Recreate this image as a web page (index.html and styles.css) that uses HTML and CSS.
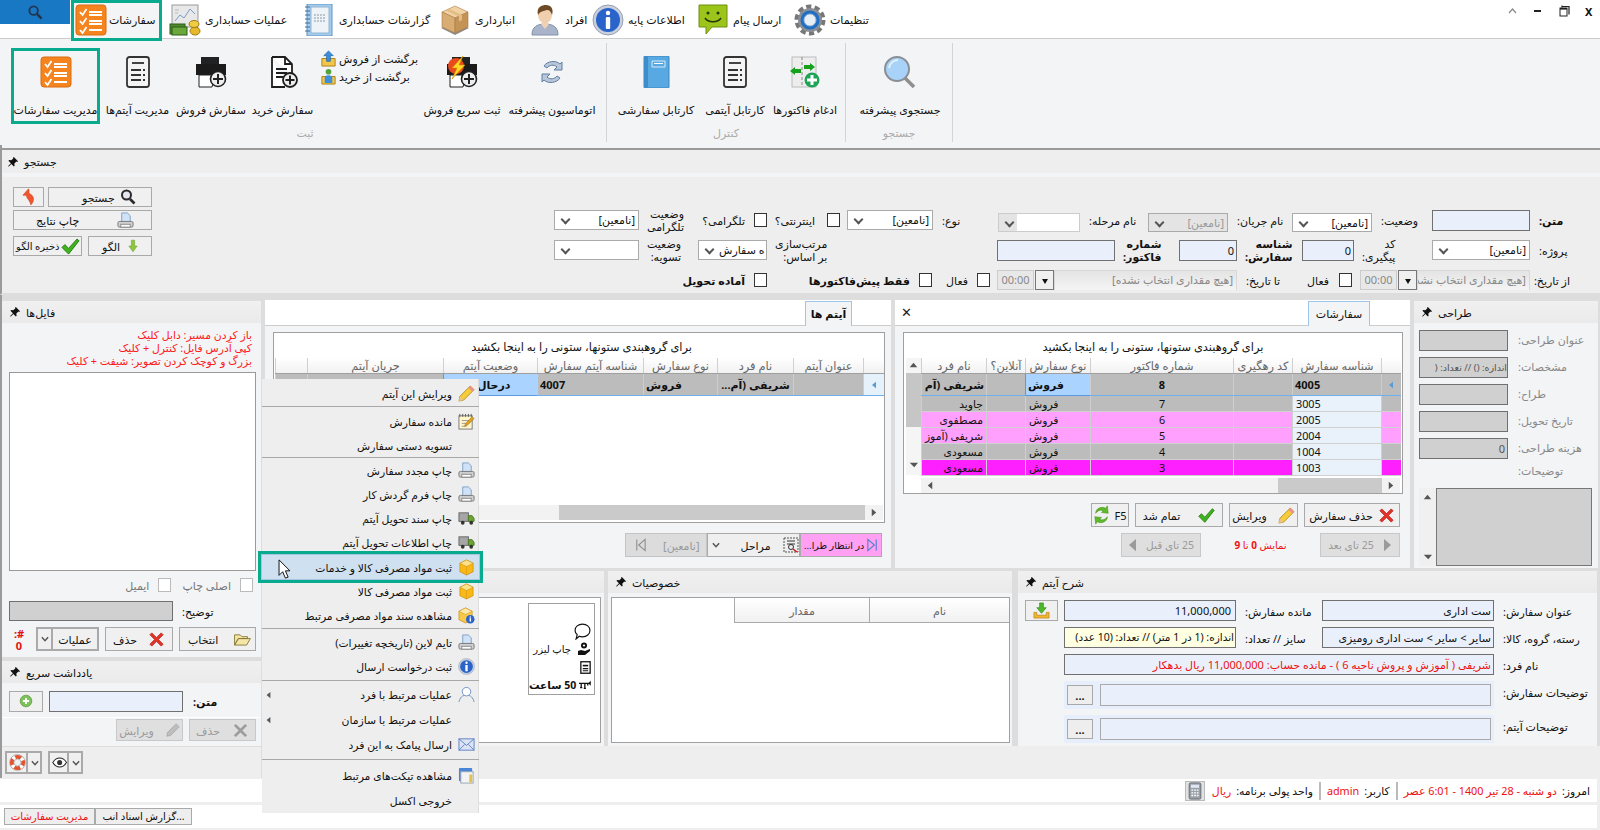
FILE: index.html
```html
<!DOCTYPE html>
<html lang="fa">
<head>
<meta charset="utf-8">
<title>مدیریت سفارشات</title>
<link rel="stylesheet" href="styles.css">
</head>
<body>
<svg class="sprite" xmlns="http://www.w3.org/2000/svg">
  <symbol id="i-orders" viewBox="0 0 32 32"><rect x="1" y="1" width="30" height="30" rx="3" fill="#f5841f" stroke="#d96d10"/><path d="M5 8l2.500 3 4-6M5 17l2.500 3 4-6M5 26l2.500 3 4-6" fill="none" stroke="#fff" stroke-width="1.800"/><path d="M14 8h13M14 11h13M14 17h13M14 20h13M14 26h13" stroke="#fff" stroke-width="1.800"/></symbol>
  <symbol id="i-acc" viewBox="0 0 32 32"><rect x="3" y="1" width="26" height="22" fill="#e8e8e8" stroke="#999"/><path d="M6 17l5-6 4 3 6-9 5 5" fill="none" stroke="#7b9cc9"/><path d="M6 6h4M6 9h3" stroke="#bbb"/><rect x="1" y="20" width="15" height="10" fill="#4f8a2c" stroke="#2c5c17"/><rect x="3" y="23" width="15" height="8" fill="#6ba73a" stroke="#2c5c17"/><ellipse cx="26" cy="27" rx="5" ry="4" fill="#e5b92b" stroke="#a17c0d"/><ellipse cx="25" cy="20" rx="5" ry="3.500" fill="#f0cb44" stroke="#a17c0d"/></symbol>
  <symbol id="i-note" viewBox="0 0 32 32"><rect x="4" y="0" width="25" height="32" fill="#a7cbea" stroke="#5a93c4"/><rect x="8" y="3" width="18" height="26" fill="#eef3f8" stroke="#8fb5d6"/><path d="M11 11h12M11 14h12M11 17h12" stroke="#8a9aa8" stroke-dasharray="2 1"/><path d="M2 3h5M2 7h5M2 11h5M2 15h5M2 19h5M2 23h5M2 27h5" stroke="#3b6f9c"/></symbol>
  <symbol id="i-box" viewBox="0 0 32 32"><path d="M2 24l14 7 14-7-14-6z" fill="#8c8c8c"/><path d="M16 2L3 8l13 6 13-6z" fill="#f0d2a3" stroke="#a97c46" stroke-width=".600"/><path d="M3 8v15l13 6V14z" fill="#d8ac72" stroke="#a97c46" stroke-width=".600"/><path d="M29 8v15l-13 6V14z" fill="#c49356" stroke="#a97c46" stroke-width=".600"/><path d="M10 5l13 6v5l-3 1.500v-5L7 6.500z" fill="#e2bb85"/></symbol>
  <symbol id="i-person" viewBox="0 0 32 32"><path d="M3 31c0-8 5-11 13-11s13 3 13 11z" fill="#a9b3c9" stroke="#8390a8"/><path d="M12 20l4 5 4-5-2-2h-4z" fill="#f0d3b5"/><ellipse cx="16" cy="11" rx="7" ry="8.500" fill="#efcfae"/><path d="M9 11C7 3 13 1 17 1c5 0 8 4 6 10-1-3-2-5-5-5-3 1-7 1-9 5z" fill="#6e4a26"/></symbol>
  <symbol id="i-info" viewBox="0 0 32 32"><circle cx="16" cy="16" r="15" fill="#c9d0dc" stroke="#98a2b3"/><circle cx="16" cy="16" r="12" fill="#2a63c9"/><circle cx="16" cy="9" r="2.200" fill="#fff"/><rect x="13.800" y="13" width="4.400" height="12" rx="1" fill="#fff"/></symbol>
  <symbol id="i-msg" viewBox="0 0 32 32"><path d="M2 1h28v22H15l-6 7v-7H2z" fill="#9cc51c" stroke="#6f8f0e"/><circle cx="11" cy="9" r="1.500" fill="#26360a"/><circle cx="21" cy="9" r="1.500" fill="#26360a"/><path d="M8 14c3 5 13 5 16 0" fill="none" stroke="#26360a" stroke-width="1.500"/></symbol>
  <symbol id="i-gear" viewBox="0 0 32 32"><circle cx="16" cy="16" r="13" fill="none" stroke="#777" stroke-width="5" stroke-dasharray="5 3.170"/><circle cx="16" cy="16" r="12" fill="#8a8f96"/><circle cx="16" cy="16" r="9.500" fill="#1f6fc4"/><circle cx="16" cy="16" r="6" fill="#e8eef5" stroke="#9bb8d8"/></symbol>
  <symbol id="i-lens" viewBox="0 0 16 16"><circle cx="6.500" cy="6" r="4.500" fill="#e4e8ee" stroke="#2a2a2a" stroke-width="2"/><path d="M10 10l4.500 4.500" stroke="#2a2a2a" stroke-width="2.600"/></symbol>
  <symbol id="i-lens-blue" viewBox="0 0 16 16"><circle cx="6" cy="6" r="4.500" fill="none" stroke="#22364f" stroke-width="2"/><path d="M9.500 9.500l5 5" stroke="#22364f" stroke-width="2.800"/></symbol>
  <symbol id="i-items" viewBox="0 0 32 32"><rect x="5" y="1" width="22" height="30" rx="2.500" fill="#f4f4f4" stroke="#333" stroke-width="1.800"/><rect x="10" y="6" width="12" height="2" fill="#444"/><path d="M9 14h10M9 19h10M9 24h10" stroke="#333" stroke-width="2.200"/><path d="M21 14h3M21 19h3M21 24h3" stroke="#333" stroke-width="2.200" stroke-dasharray="2 1"/></symbol>
  <symbol id="i-print-add" viewBox="0 0 32 32"><rect x="6" y="1" width="18" height="7" fill="#222"/><rect x="1" y="8" width="30" height="11" fill="#1b1b1b"/><path d="M4 19h16l-3 12H4z" fill="#fff" stroke="#222"/><circle cx="23" cy="23" r="7.500" fill="#eee" stroke="#222" stroke-width="1.600"/><path d="M23 18v10M18 23h10" stroke="#222" stroke-width="2"/></symbol>
  <symbol id="i-doc-add" viewBox="0 0 32 32"><path d="M5 1h13l7 7v11M25 8h-7V1M5 1v30h13" fill="#fff" stroke="#1e1e1e" stroke-width="1.800"/><path d="M9 13h11M9 17h11M9 21h7" stroke="#1e1e1e" stroke-width="1.800"/><circle cx="23" cy="24" r="7" fill="#eee" stroke="#1e1e1e" stroke-width="1.800"/><path d="M23 19.500v9M18.500 24h9" stroke="#1e1e1e" stroke-width="2"/></symbol>
  <symbol id="i-ret-up" viewBox="0 0 18 18"><path d="M2 9h14v8H2z" fill="#f2c64a" stroke="#a9821a"/><path d="M9 1l5 5h-3v6H7V6H4z" fill="#3c8fdc" stroke="#1c5f9e" stroke-width=".700"/></symbol>
  <symbol id="i-ret-in" viewBox="0 0 18 18"><path d="M2 9h14v8H2z" fill="#f2c64a" stroke="#a9821a"/><circle cx="9" cy="4" r="3" fill="#53a43a"/><path d="M5 10c0-3 8-3 8 0v6H5z" fill="#3c8fdc"/></symbol>
  <symbol id="i-fast" viewBox="0 0 32 32"><rect x="6" y="1" width="18" height="7" fill="#222"/><rect x="1" y="8" width="30" height="11" fill="#1b1b1b"/><path d="M4 19h16l-3 12H4z" fill="#fff" stroke="#222"/><circle cx="23" cy="23" r="7.500" fill="#eee" stroke="#222" stroke-width="1.600"/><path d="M23 18v10M18 23h10" stroke="#222" stroke-width="2"/><circle cx="10" cy="10" r="8" fill="#e8491d"/><path d="M17 0L6 12h5l-5 11 13-14h-6z" fill="#ffd726" stroke="#d08a00" stroke-width=".600"/></symbol>
  <symbol id="i-cycle" viewBox="0 0 32 32"><path d="M8 10C11 5 20 4 24 8l2-2v8h-8l3-3c-3-3-8-2-10 1zM24 22c-3 5-12 6-16 2l-2 2v-8h8l-3 3c3 3 8 2 10-1z" fill="#b8c6d8" stroke="#5f7ea3"/></symbol>
  <symbol id="i-book" viewBox="0 0 32 32"><rect x="4" y="0" width="25" height="32" rx="1" fill="#58a8e2" stroke="#3d85bd"/><rect x="4" y="0" width="4" height="32" fill="#3d8ccc"/><path d="M12 5h13v6H12z" fill="none" stroke="#d6ebfa"/><path d="M14 7.500h9" stroke="#fff"/></symbol>
  <symbol id="i-merge" viewBox="0 0 32 32"><rect x="3" y="1" width="24" height="30" fill="#ededed" stroke="#bbb"/><path d="M13 1v30" stroke="#888" stroke-dasharray="3 2"/><path d="M1 15l5-4v2h6v4H6v2z" fill="#16a11c"/><path d="M26 11l-5-4v2h-6v4h6v2z" fill="#16a11c"/><circle cx="23" cy="24" r="7.500" fill="#1ea456"/><path d="M23 19v10M18 24h10" stroke="#fff" stroke-width="3"/></symbol>
  <symbol id="i-glass" viewBox="0 0 32 32"><path d="M21 22l9 9" stroke="#8f8f8f" stroke-width="3.500"/><circle cx="13" cy="13" r="12" fill="#a8d2f7" stroke="#8a8f96" stroke-width="2"/><path d="M5 12c1-6 6-8 9-8" fill="none" stroke="#dff0ff" stroke-width="2"/></symbol>
  <symbol id="i-pin" viewBox="0 0 12 12"><path d="M7 0l5 5-1 1-1-.500-2.500 2.500.500 2.500-1 1-3-3L1 11.500 0 11l3.500-3.500-3-3 1-1 2.500.500L6.500 1.500 6 1z" fill="#111"/></symbol>
  <symbol id="i-undo" viewBox="0 0 16 20"><path d="M7 1L1 8h4c0 4 4 5 5 11 4-3 5-11-2-13V1z" fill="#f0552d" stroke="#c53c18" stroke-width=".600"/></symbol>
  <symbol id="i-printer" viewBox="0 0 18 18"><path d="M5 1h6l3 3v7H5z" fill="#cfe2f8" stroke="#7fa0c8"/><rect x="1" y="10" width="16" height="6" rx="1.500" fill="#d0d0d0" stroke="#777"/><rect x="4" y="13" width="10" height="3" fill="#fff" stroke="#888"/></symbol>
  <symbol id="i-down" viewBox="0 0 12 16"><path d="M4 1h4v7h3l-5 7-5-7h3z" fill="#8cc63e" stroke="#6a9a26" stroke-width=".600"/></symbol>
  <symbol id="i-check" viewBox="0 0 20 18"><path d="M1 10l3-3 4 4L17 1l2 2L8 17z" fill="#3fb41e" stroke="#1f7a0a"/></symbol>
  <symbol id="i-x" viewBox="0 0 18 18"><path d="M2 4l2-2 5 5 5-5 2 2-5 5 5 5-2 2-5-5-5 5-2-2 5-5z" fill="#e53226" stroke="#b4201a" stroke-width=".800"/></symbol>
  <symbol id="i-x-off" viewBox="0 0 18 18"><path d="M2 4l2-2 5 5 5-5 2 2-5 5 5 5-2 2-5-5-5 5-2-2 5-5z" fill="#9d9d9d"/></symbol>
  <symbol id="i-pencil" viewBox="0 0 18 18"><path d="M13 1l4 4L6 16l-5 1 1-5z" fill="#f6cc3a" stroke="#a68212" stroke-width=".800"/><path d="M13 1l4 4-2 2-4-4z" fill="#ea9090"/><path d="M2 12l4 4-5 1z" fill="#e8c58e"/></symbol>
  <symbol id="i-pencil-off" viewBox="0 0 18 18"><path d="M13 1l4 4L6 16l-5 1 1-5z" fill="#bdbdbd" stroke="#a0a0a0" stroke-width=".800"/></symbol>
  <symbol id="i-folder" viewBox="0 0 18 14"><path d="M1 13V2h6l2 2h6v2H5l-4 7zM1 13l4-7h13l-4 7z" fill="#f4e5a8" stroke="#8b7a35"/></symbol>
  <symbol id="i-buoy" viewBox="0 0 18 18"><circle cx="9" cy="9" r="8.300" fill="#fff" stroke="#999" stroke-width=".800"/><circle cx="9" cy="9" r="6" fill="none" stroke="#e2532e" stroke-width="4" stroke-dasharray="6.400 3.020" stroke-dashoffset="3.200"/><circle cx="9" cy="9" r="3.700" fill="#f0f0f0" stroke="#999" stroke-width=".700"/></symbol>
  <symbol id="i-eye" viewBox="0 0 18 12"><path d="M1 6c4-7 12-7 16 0-4 7-12 7-16 0z" fill="#fff" stroke="#222" stroke-width="1.200"/><circle cx="9" cy="6" r="3" fill="#333"/></symbol>
  <symbol id="i-plus" viewBox="0 0 18 18"><circle cx="9" cy="9" r="7.500" fill="#7cc25a" stroke="#5d9c42"/><path d="M9 5v8M5 9h8" stroke="#fff" stroke-width="2.400"/></symbol>
  <symbol id="i-refresh" viewBox="0 0 20 24"><path d="M3 10C3 4 10 1 15 4l2-3 1 9-8-1 2-2C9 5 5 7 3 10zM17 14c0 6-7 9-12 6l-2 3-1-9 8 1-2 2c3 2 7 0 9-3z" fill="#60b82c" stroke="#3d8a14" stroke-width=".600"/></symbol>
  <symbol id="i-notepad" viewBox="0 0 18 18"><rect x="1" y="3" width="14" height="14" fill="#fff6cc" stroke="#777"/><path d="M2 1v3M5 1v3M8 1v3M11 1v3M14 1v3" stroke="#555"/><path d="M4 8h8M4 11h6M4 14h5" stroke="#999"/><path d="M15 4l2 2-7 7-3 1 1-3z" fill="#e0a020" stroke="#8a6510" stroke-width=".500"/></symbol>
  <symbol id="i-truck" viewBox="0 0 18 14"><rect x="1" y="1" width="10" height="9" fill="#a6a6a6" stroke="#666"/><path d="M11 4h4l2 3v3h-6z" fill="#6da33a" stroke="#4a7a1f"/><circle cx="5" cy="11.500" r="2" fill="#333"/><circle cx="14" cy="11.500" r="2" fill="#333"/></symbol>
  <symbol id="i-ybox" viewBox="0 0 18 18"><path d="M9 1l7 3.500v9L9 17l-7-3.500v-9z" fill="#f8b918" stroke="#c98a0a" stroke-width=".700"/><path d="M9 1l7 3.500L9 8 2 4.500z" fill="#fde18c" stroke="#c98a0a" stroke-width=".500"/><path d="M9 8v9" stroke="#d69510" stroke-width=".600"/></symbol>
  <symbol id="i-ybox-info" viewBox="0 0 18 18"><path d="M8 1l7 3.500v9L8 17l-7-3.500v-9z" fill="#f8c948" stroke="#c98a0a" stroke-width=".700"/><path d="M8 1l7 3.500L8 8 1 4.500z" fill="#fde9ac" stroke="#c98a0a" stroke-width=".500"/><circle cx="13" cy="13" r="4.500" fill="#2a63c9"/><rect x="12.300" y="11.800" width="1.500" height="3.600" fill="#fff"/><rect x="12.300" y="10" width="1.500" height="1.200" fill="#fff"/></symbol>
  <symbol id="i-user" viewBox="0 0 18 18"><circle cx="9" cy="6" r="4.500" fill="#fff" stroke="#6f8fc4"/><path d="M1 17c1-5 4-7 6-7M17 17c-1-5-4-7-6-7" fill="none" stroke="#6f8fc4"/></symbol>
  <symbol id="i-mail" viewBox="0 0 18 14"><rect x="1" y="1" width="16" height="12" fill="#dbe4f5" stroke="#5f7fc4"/><path d="M1 1l8 7 8-7M1 13l6-6M17 13l-6-6" fill="none" stroke="#5f7fc4"/></symbol>
  <symbol id="i-ticket" viewBox="0 0 18 18"><rect x="1" y="1" width="14" height="14" rx="1" fill="#4a86d8"/><rect x="3" y="5" width="13" height="12" fill="#f3f3f3" stroke="#9aa4b4"/><path d="M12 8h3v7l-1.500 2-1.500-2z" fill="#e5c04a"/></symbol>
  <symbol id="i-stage" viewBox="0 0 16 16"><rect x="1" y="1" width="14" height="14" fill="#eee" stroke="#555" stroke-dasharray="2 1"/><path d="M4 4h8M4 7h8" stroke="#333"/><circle cx="8" cy="10" r="2.500" fill="none" stroke="#333"/><path d="M10 12l4 3" stroke="#d01818" stroke-width="1.500"/></symbol>
  <symbol id="i-bubble" viewBox="0 0 16 16"><path d="M8 1c4 0 7 2.500 7 6s-3 6-7 6c-1 0-2 0-3-.500L2 15l1-4C1.500 9.500 1 8.500 1 7c0-3.500 3-6 7-6z" fill="#fff" stroke="#111" stroke-width="1.100"/></symbol>
  <symbol id="i-hand" viewBox="0 0 14 14"><circle cx="7" cy="3.500" r="3" fill="#111"/><circle cx="7" cy="3.500" r="1.100" fill="#fff"/><path d="M1 9l3-1 4 1 5-2v2l-5 4H1z" fill="#111"/></symbol>
  <symbol id="i-doc" viewBox="0 0 10 12"><rect x=".700" y=".700" width="8.600" height="10.600" fill="#fff" stroke="#111" stroke-width="1.200"/><path d="M2.500 3.500h5v1.500h-5z" fill="#111"/><path d="M2.500 7h5M2.500 9h5" stroke="#111"/></symbol>
  <symbol id="i-flow" viewBox="0 0 16 12"><path d="M0 3h14M14 3l2-2v4zM3 3v6M8 3v7M12 3v3M1.500 9h3M6.500 10h3" stroke="#111" stroke-width="1.800" fill="#111"/></symbol>
  <symbol id="i-calc" viewBox="0 0 16 20"><rect x="1.500" y="1" width="13" height="18" rx="1.500" fill="#9aa0a8" stroke="#60666e"/><rect x="3.500" y="3" width="9" height="3.500" fill="#dfe8f2"/><path d="M4 9h2M7 9h2M10 9h2M4 12h2M7 12h2M10 12h2M4 15h2M7 15h2M10 15h2" stroke="#fff" stroke-width="1.500"/></symbol>
  <symbol id="i-dl" viewBox="0 0 18 18"><path d="M7 1h4v5h3l-5 6-5-6h3z" fill="#4db82a" stroke="#2f8a14" stroke-width=".700"/><path d="M1 11h3v3h10v-3h3v6H1z" fill="#f2b631" stroke="#b67d0b" stroke-width=".700"/></symbol>
  <symbol id="i-caret" viewBox="0 0 9 6"><path d="M1 1l3.500 4L8 1" fill="none" stroke="#555" stroke-width="1.600"/></symbol>
  <symbol id="i-tri-r" viewBox="0 0 8 12"><path d="M1 1l6 5-6 5z" fill="#555"/></symbol>
  <symbol id="i-tri-l" viewBox="0 0 8 12"><path d="M7 1L1 6l6 5z" fill="#555"/></symbol>
  <symbol id="i-tri-blue" viewBox="0 0 8 12"><path d="M7 1L1 6l6 5z" fill="#5a9bd5"/></symbol>
  <symbol id="i-tri-u" viewBox="0 0 12 8"><path d="M1 7l5-6 5 6z" fill="#555"/></symbol>
  <symbol id="i-tri-d" viewBox="0 0 12 8"><path d="M1 1l6 6 5-6z" fill="#555"/></symbol>
  <symbol id="i-first" viewBox="0 0 14 14"><path d="M3 1v12M12 1L5 7l7 6z" fill="none" stroke="#8f8f8f" stroke-width="1.200"/></symbol>
  <symbol id="i-last" viewBox="0 0 14 14"><path d="M11 1v12M2 1l7 6-7 6z" fill="none" stroke="#4f7fd0" stroke-width="1.200"/></symbol>
  <symbol id="i-next" viewBox="0 0 10 16"><path d="M1 1l8 7-8 7z" fill="#9b9b9b"/></symbol>
  <symbol id="i-prev" viewBox="0 0 10 16"><path d="M9 1L1 8l8 7z" fill="#9b9b9b"/></symbol>
  <symbol id="i-cursor" viewBox="0 0 14 22"><path d="M1 1v17l4-4 3 7 3-1-3-7h5z" fill="#fff" stroke="#000"/></symbol>
  <symbol id="i-win-up" viewBox="0 0 9 6"><path d="M1 5l3.500-4L8 5" fill="none" stroke="#888" stroke-width="1.200"/></symbol>
  <symbol id="i-win-min" viewBox="0 0 9 4"><rect x="1" y="1" width="7" height="2" fill="#222"/></symbol>
  <symbol id="i-win-restore" viewBox="0 0 11 12"><path d="M3 1.500h7v8M3 .5v2" fill="none" stroke="#222" stroke-width="1.200"/><rect x="1" y="3" width="7" height="8" fill="#fff" stroke="#222"/><rect x="1" y="3" width="7" height="1.600" fill="#222"/></symbol>
</svg>

<header class="topbar">
  <div class="topbar-search"><svg class="ic-top-lens"><use href="#i-lens-blue"/></svg></div>
  <div class="nav-item nav-item-active"><svg class="ic-top"><use href="#i-orders"/></svg><span>سفارشات</span></div>
  <div class="nav-item"><svg class="ic-top"><use href="#i-acc"/></svg><span>عملیات حسابداری</span></div>
  <div class="nav-item"><svg class="ic-top"><use href="#i-note"/></svg><span>گزارشات حسابداری</span></div>
  <div class="nav-item"><svg class="ic-top"><use href="#i-box"/></svg><span>انبارداری</span></div>
  <div class="nav-item"><svg class="ic-top"><use href="#i-person"/></svg><span>افراد</span></div>
  <div class="nav-item"><svg class="ic-top"><use href="#i-info"/></svg><span>اطلاعات پایه</span></div>
  <div class="nav-item"><svg class="ic-top"><use href="#i-msg"/></svg><span>ارسال پیام</span></div>
  <div class="nav-item"><svg class="ic-top"><use href="#i-gear"/></svg><span>تنظیمات</span></div>
  <div class="win-ctrls">
    <svg class="ic-win-up"><use href="#i-win-up"/></svg>
    <svg class="ic-win-min"><use href="#i-win-min"/></svg>
    <svg class="ic-win-restore"><use href="#i-win-restore"/></svg>
    <span class="win-close">X</span>
  </div>
</header>

<section class="ribbon">
  <div class="rgroup rgroup-reg">
    <div class="rtools">
      <div class="rtool rtool-active"><svg class="ic-rb"><use href="#i-orders"/></svg><span>مدیریت سفارشات</span></div>
      <div class="rtool"><svg class="ic-rb"><use href="#i-items"/></svg><span>مدیریت آیتم‌ها</span></div>
      <div class="rtool"><svg class="ic-rb"><use href="#i-print-add"/></svg><span>سفارش فروش</span></div>
      <div class="rtool"><svg class="ic-rb"><use href="#i-doc-add"/></svg><span>سفارش خرید</span></div>
      <div class="rsmall">
        <div class="rsmall-row"><svg class="ic18"><use href="#i-ret-up"/></svg><span>برگشت از فروش</span></div>
        <div class="rsmall-row"><svg class="ic18"><use href="#i-ret-in"/></svg><span>برگشت از خرید</span></div>
      </div>
      <div class="rtool"><svg class="ic-rb"><use href="#i-fast"/></svg><span>ثبت سریع فروش</span></div>
      <div class="rtool"><svg class="ic-rb"><use href="#i-cycle"/></svg><span>اتوماسیون پیشرفته</span></div>
    </div>
    <div class="rgroup-label">ثبت</div>
  </div>
  <div class="rgroup rgroup-ctrl">
    <div class="rtools">
      <div class="rtool"><svg class="ic-rb"><use href="#i-book"/></svg><span>کارتابل سفارشی</span></div>
      <div class="rtool"><svg class="ic-rb"><use href="#i-items"/></svg><span>کارتابل آیتمی</span></div>
      <div class="rtool"><svg class="ic-rb"><use href="#i-merge"/></svg><span>ادغام فاکتورها</span></div>
    </div>
    <div class="rgroup-label">کنترل</div>
  </div>
  <div class="rgroup rgroup-find">
    <div class="rtools">
      <div class="rtool"><svg class="ic-rb"><use href="#i-glass"/></svg><span>جستجوی پیشرفته</span></div>
    </div>
    <div class="rgroup-label">جستجو</div>
  </div>
</section>

<section class="search">
  <div class="phead phead-search"><svg class="ic-pin"><use href="#i-pin"/></svg><span>جستجو</span></div>
  <div class="search-body">
    <div class="search-actions">
      <div class="sa-row">
        <button class="btn btn-back"><svg class="ic-undo"><use href="#i-undo"/></svg></button>
        <button class="btn btn-find"><span>جستجو</span><svg class="ic16"><use href="#i-lens"/></svg></button>
      </div>
      <div class="sa-row">
        <button class="btn btn-wide"><span>چاپ نتایج</span><svg class="ic18"><use href="#i-printer"/></svg></button>
      </div>
      <div class="sa-row sa-row-last">
        <button class="btn btn-save"><span>ذخیره الگو</span><svg class="ic-check"><use href="#i-check"/></svg></button>
        <button class="btn btn-tpl"><span>الگو</span><svg class="ic-down"><use href="#i-down"/></svg></button>
      </div>
    </div>
    <div class="search-form">
      <div class="frow frow-1">
        <label class="flabel flabel-b">متن:</label><div class="inp"></div>
        <label class="flabel">وضعیت:</label><div class="sel sel-low">[نامعین]</div>
        <label class="flabel">نام جریان:</label><div class="sel sel-low sel-off">[نامعین]</div>
        <label class="flabel">نام مرحله:</label><div class="sel sel-low sel-part"></div>
        <label class="flabel">نوع:</label><div class="sel">[نامعین]</div>
        <div class="chk chk-i1"><i class="box"></i><span>اینترنتی؟</span></div>
        <div class="chk chk-i2"><i class="box"></i><span>تلگرامی؟</span></div>
        <label class="flabel flabel-2">وضعیت<br>تلگرامی</label><div class="sel">[نامعین]</div>
      </div>
      <div class="frow frow-2">
        <label class="flabel">پروژه:</label><div class="sel">[نامعین]</div>
        <label class="flabel flabel-2">کد<br>پیگیری:</label><div class="inp inp-num">0</div>
        <label class="flabel flabel-b flabel-2">شناسه<br>سفارش:</label><div class="inp inp-num">0</div>
        <label class="flabel flabel-b flabel-2">شماره<br>فاکتور:</label><div class="inp"></div>
        <label class="flabel flabel-2">مرتب‌سازی<br>بر اساس:</label><div class="sel sel-clip">ه سفارش</div>
        <label class="flabel flabel-2">وضعیت<br>تسویه:</label><div class="sel"></div>
      </div>
      <div class="frow frow-3">
        <label class="flabel">از تاریخ:</label>
        <div class="datebox datebox-a"><div class="date-text">[هیچ مقداری انتخاب نشده</div><div class="date-btn"><i></i></div><div class="date-time">00:00</div></div>
        <div class="chk chk-f1"><i class="box"></i><span>فعال</span></div>
        <label class="flabel">تا تاریخ:</label>
        <div class="datebox datebox-b"><div class="date-text">[هیچ مقداری انتخاب نشده]</div><div class="date-btn"><i></i></div><div class="date-time">00:00</div></div>
        <div class="chk chk-f2"><i class="box"></i><span>فعال</span></div>
        <div class="chk chk-f3 chk-b"><i class="box"></i><span>فقط پیش‌فاکتورها</span></div>
        <div class="chk chk-f4 chk-b"><i class="box"></i><span>آماده تحویل</span></div>
      </div>
    </div>
  </div>
</section>

<main class="main">
  <aside class="left">
    <section class="files">
      <div class="phead"><svg class="ic-pin"><use href="#i-pin"/></svg><span>فایل‌ها</span></div>
      <div class="files-body">
        <p class="hints">باز کردن مسیر: دابل کلیک<br>کپی آدرس فایل: کنترل + کلیک<br>بزرگ و کوچک کردن تصویر: شیفت + کلیک</p>
        <div class="filelist"></div>
        <div class="files-checks">
          <div class="chk chk-off"><i class="box"></i><span>اصلی چاپ</span></div>
          <div class="chk chk-off"><i class="box"></i><span>ایمیل</span></div>
        </div>
        <div class="files-desc"><label class="flabel">توضیح:</label><div class="inp inp-dis"></div></div>
        <div class="files-btns">
          <button class="btn btn-sel"><span>انتخاب</span><svg class="ic-folder"><use href="#i-folder"/></svg></button>
          <button class="btn btn-del"><span>حذف</span><svg class="ic18"><use href="#i-x"/></svg></button>
          <div class="split split-ops"><span>عملیات</span><i><svg class="ic-caret"><use href="#i-caret"/></svg></i></div>
          <div class="hash">#:<br>0</div>
        </div>
      </div>
    </section>
    <section class="notes">
      <div class="phead"><svg class="ic-pin"><use href="#i-pin"/></svg><span>یادداشت سریع</span></div>
      <div class="notes-body">
        <div class="notes-row"><label class="flabel flabel-b">متن:</label><div class="inp"></div><button class="btn btn-add"><svg class="ic14"><use href="#i-plus"/></svg></button></div>
        <div class="notes-acts">
          <button class="btn btn-off btn-ndel"><span>حذف</span><svg class="ic18"><use href="#i-x-off"/></svg></button>
          <button class="btn btn-off btn-nedit"><span>ویرایش</span><svg class="ic14"><use href="#i-pencil-off"/></svg></button>
        </div>
      </div>
    </section>
    <div class="left-foot">
      <div class="split split-ic"><svg class="ic18"><use href="#i-buoy"/></svg><i><svg class="ic-caret"><use href="#i-caret"/></svg></i></div>
      <div class="split split-ic"><svg class="ic-eye"><use href="#i-eye"/></svg><i><svg class="ic-caret"><use href="#i-caret"/></svg></i></div>
    </div>
  </aside>

  <div class="work">
    <div class="work-top">
      <section class="tabpanel tabpanel-items">
        <div class="tabs"><div class="tab tab-b">آیتم ها</div></div>
        <div class="gbox gbox-items">
          <div class="gdrop">برای گروهبندی ستونها، ستونی را به اینجا بکشید</div>
          <table class="gt gt-items">
            <colgroup><col class="ci0"><col class="ci1"><col class="ci2"><col class="ci3"><col class="ci4"><col class="ci5"><col class="ci6"><col class="ci7"></colgroup>
            <thead><tr><th></th><th>عنوان آیتم</th><th>نام فرد</th><th>نوع سفارش</th><th>شناسه آیتم سفارش</th><th>وضعیت آیتم</th><th>جریان آیتم</th><th></th></tr></thead>
            <tbody><tr class="r-main"><td class="ind"><svg class="ic-ind"><use href="#i-tri-blue"/></svg></td><td></td><td class="c">شریفی (آم...</td><td class="l">فروش</td><td class="l">4007</td><td class="l cur">درحال انجام</td><td></td><td></td></tr></tbody>
          </table>
          <div class="gfill"></div>
          <div class="hscroll hscroll-items"><span class="hs-track"></span><span class="hs-thumb"></span><span class="hs-arrow"><svg class="ic-tri"><use href="#i-tri-r"/></svg></span></div>
        </div>
        <div class="items-foot">
          <div class="nav-off"><svg class="ic-first"><use href="#i-first"/></svg><span>[نامعین]</span></div>
          <div class="stages"><svg class="ic-caret"><use href="#i-caret"/></svg><span>مراحل</span><svg class="ic-stage"><use href="#i-stage"/></svg></div>
          <div class="pending"><span>در انتظار طرا...</span><svg class="ic-first"><use href="#i-last"/></svg></div>
        </div>
      </section>

      <section class="tabpanel tabpanel-orders">
        <div class="tabs tabs-close"><span class="tab-close">✕</span><div class="tab">سفارشات</div></div>
        <div class="gbox gbox-orders">
          <div class="gdrop">برای گروهبندی ستونها، ستونی را به اینجا بکشید</div>
          <div class="gt-wrap">
            <div class="vscroll"><svg class="ic-vs"><use href="#i-tri-u"/></svg><i></i><svg class="ic-vs"><use href="#i-tri-d"/></svg></div>
            <table class="gt gt-orders">
              <colgroup><col class="co0"><col class="co1"><col class="co2"><col class="co3"><col class="co4"><col class="co5"><col class="co6"></colgroup>
              <thead><tr><th></th><th>شناسه سفارش</th><th>کد رهگیری</th><th>شماره فاکتور</th><th>نوع سفارش</th><th>آنلاین؟</th><th class="clipth">نام فرد</th></tr></thead>
              <tbody>
                <tr class="r-main"><td class="ind"><svg class="ic-ind"><use href="#i-tri-blue"/></svg></td><td class="l">4005</td><td></td><td class="c">8</td><td class="l cur">فروش</td><td></td><td class="clip">شریفی (آم</td></tr>
                <tr class="r-gray"><td></td><td class="l idc">3005</td><td></td><td class="c">7</td><td class="l">فروش</td><td></td><td>جاوید</td></tr>
                <tr class="r-pink"><td></td><td class="l idc">2005</td><td></td><td class="c">6</td><td class="l">فروش</td><td></td><td>مصطفوی</td></tr>
                <tr class="r-pink"><td></td><td class="l idc">2004</td><td></td><td class="c">5</td><td class="l">فروش</td><td></td><td class="clip">شریفی (آموز</td></tr>
                <tr class="r-gray"><td></td><td class="l idc">1004</td><td></td><td class="c">4</td><td class="l">فروش</td><td></td><td>مسعودی</td></tr>
                <tr class="r-mag"><td></td><td class="l idc">1003</td><td></td><td class="c">3</td><td class="l">فروش</td><td></td><td>مسعودی</td></tr>
              </tbody>
            </table>
          </div>
          <div class="hscroll hscroll-orders"><span class="hs-arrow"><svg class="ic-tri"><use href="#i-tri-l"/></svg></span><span class="hs-track"></span><span class="hs-thumb"></span><span class="hs-arrow"><svg class="ic-tri"><use href="#i-tri-r"/></svg></span></div>
        </div>
        <div class="orders-acts">
          <button class="btn btn-o1"><span>حذف سفارش</span><svg class="ic18"><use href="#i-x"/></svg></button>
          <button class="btn btn-o2"><span>ویرایش</span><svg class="ic18"><use href="#i-pencil"/></svg></button>
          <button class="btn btn-o3"><span>تمام شد</span><svg class="ic18"><use href="#i-check"/></svg></button>
          <button class="btn btn-o4"><svg class="ic-refresh"><use href="#i-refresh"/></svg><span>F5</span></button>
        </div>
        <div class="orders-pager">
          <button class="btn btn-off btn-page"><span>25 تای بعد</span><svg class="ic-pg"><use href="#i-next"/></svg></button>
          <span class="pager-info">نمایش <b>0</b> تا <b>9</b></span>
          <button class="btn btn-off btn-page"><svg class="ic-pg"><use href="#i-prev"/></svg><span>25 تای قبل</span></button>
        </div>
      </section>

      <section class="design">
        <div class="phead"><svg class="ic-pin"><use href="#i-pin"/></svg><span>طراحی</span></div>
        <div class="design-body">
          <label>عنوان طراحی:</label><div class="inp inp-dis"></div>
          <label>مشخصات:</label><div class="inp inp-dis inp-cut">اندازه: () // تعداد: (</div>
          <label>طراح:</label><div class="inp inp-dis"></div>
          <label>تاریخ تحویل:</label><div class="inp inp-dis"></div>
          <label>هزینه طراحی:</label><div class="inp inp-dis inp-num">0</div>
          <label class="design-note">توضیحات:</label>
          <div class="design-area"><div class="area-scroll"><svg class="ic-vs"><use href="#i-tri-u"/></svg><svg class="ic-vs"><use href="#i-tri-d"/></svg></div><div class="area-box"></div></div>
        </div>
      </section>
    </div>

    <div class="work-bottom">
      <section class="pcard">
        <div class="phead"></div>
        <div class="pcard-box">
          <div class="card">
            <div class="card-row"><svg class="ic-bubble"><use href="#i-bubble"/></svg></div>
            <div class="card-row"><svg class="ic14"><use href="#i-hand"/></svg><span>چاپ لیزر</span></div>
            <div class="card-row"><svg class="ic-doc"><use href="#i-doc"/></svg></div>
            <div class="card-row card-row-b"><svg class="ic-flow"><use href="#i-flow"/></svg><span>50 ساعت</span></div>
          </div>
        </div>
      </section>
      <section class="feat">
        <div class="phead"><svg class="ic-pin"><use href="#i-pin"/></svg><span>خصوصیات</span></div>
        <div class="feat-box">
          <div class="feat-head"><span>نام</span><span>مقدار</span></div>
        </div>
      </section>
      <section class="detail">
        <div class="phead"><svg class="ic-pin"><use href="#i-pin"/></svg><span>شرح آیتم</span></div>
        <div class="detail-body">
          <label>عنوان سفارش:</label><div class="inp inp-txt">ست اداری</div>
          <label>مانده سفارش:</label><div class="inp inp-amt">11,000,000</div>
          <button class="btn btn-dl"><svg class="ic18"><use href="#i-dl"/></svg></button>
          <label>رسته، گروه، کالا:</label><div class="inp inp-txt">سایر &gt; سایر &gt; ست اداری رومیزی</div>
          <label>سایز // تعداد:</label><div class="inp inp-txt inp-yellow">اندازه: (1 در 1 متر) // تعداد: (10 عدد)</div>
          <span></span>
          <label>نام فرد:</label><div class="inp inp-txt inp-red">شریفی ( آموزش و پروش ناحیه 6 ) - مانده حساب: 11,000,000 ریال بدهکار</div>
          <span></span>
          <label>توضیحات سفارش:</label><div class="strip"><div class="strip-inp"></div><button class="btn btn-more">...</button></div>
          <span></span>
          <label>توضیحات آیتم:</label><div class="strip"><div class="strip-inp"></div><button class="btn btn-more">...</button></div>
          <span></span>
        </div>
      </section>
    </div>
    <div class="work-foot"></div>
  </div>

  <nav class="ctx">
    <div class="ctx-item"><svg class="ic18"><use href="#i-pencil"/></svg><span>ویرایش این آیتم</span></div>
    <hr class="ctx-sep ctx-sep-a">
    <div class="ctx-item"><svg class="ic18"><use href="#i-notepad"/></svg><span>مانده سفارش</span></div>
    <div class="ctx-item"><i class="ic18"></i><span>تسویه دستی سفارش</span></div>
    <hr class="ctx-sep ctx-sep-b">
    <div class="ctx-item"><svg class="ic18"><use href="#i-printer"/></svg><span>چاپ مجدد سفارش</span></div>
    <div class="ctx-item"><svg class="ic18"><use href="#i-printer"/></svg><span>چاپ فرم گردش کار</span></div>
    <div class="ctx-item"><svg class="ic18"><use href="#i-truck"/></svg><span>چاپ سند تحویل آیتم</span></div>
    <div class="ctx-item"><svg class="ic18"><use href="#i-truck"/></svg><span>چاپ اطلاعات تحویل آیتم</span></div>
    <div class="ctx-item ctx-item-hot"><svg class="ic18"><use href="#i-ybox"/></svg><span>ثبت مواد مصرفی کالا و خدمات</span><svg class="ic-cursor"><use href="#i-cursor"/></svg></div>
    <div class="ctx-item"><svg class="ic18"><use href="#i-ybox"/></svg><span>ثبت مواد مصرفی کالا</span></div>
    <div class="ctx-item"><svg class="ic18"><use href="#i-ybox-info"/></svg><span>مشاهده سند مواد مصرفی مرتبط</span></div>
    <hr class="ctx-sep">
    <div class="ctx-item"><svg class="ic18"><use href="#i-printer"/></svg><span>تایم لاین (تاریخچه تغییرات)</span></div>
    <div class="ctx-item ctx-item-s"><svg class="ic18"><use href="#i-info"/></svg><span>ثبت درخواست ارسال</span></div>
    <hr class="ctx-sep ctx-sep-c">
    <div class="ctx-item ctx-item-s"><svg class="ic18"><use href="#i-user"/></svg><span>عملیات مرتبط با فرد</span><svg class="ic-sub"><use href="#i-tri-l"/></svg></div>
    <div class="ctx-item ctx-item-s"><i class="ic18"></i><span>عملیات مرتبط با سازمان</span><svg class="ic-sub"><use href="#i-tri-l"/></svg></div>
    <div class="ctx-item"><svg class="ic18"><use href="#i-mail"/></svg><span>ارسال پیامک به این فرد</span></div>
    <hr class="ctx-sep ctx-sep-d">
    <div class="ctx-item ctx-item-s"><svg class="ic18"><use href="#i-ticket"/></svg><span>مشاهده تیکت‌های مرتبط</span></div>
    <div class="ctx-item"><i class="ic18"></i><span>خروجی اکسل</span></div>
  </nav>
</main>

<footer class="status">
  <span>امروز:</span><span class="red">دو شنبه - 28 تیر 1400 - 6:01 عصر</span><i class="st-div"></i>
  <span>کاربر:</span><span class="red">admin</span><i class="st-div"></i>
  <span>واحد پولی برنامه:</span><span class="red">ریال</span>
  <span class="st-calc"><svg class="ic-calc"><use href="#i-calc"/></svg></span>
</footer>
<div class="taskbar">
  <span class="task task-on">مدیریت سفارشات</span>
  <span class="task task-ltr">گزارش اسناد انب...</span>
</div>
</body>
</html>
```

FILE: styles.css
```css
* { box-sizing: border-box; }
html, body { margin: 0; padding: 0; }
body {
  width: 1600px; height: 830px; overflow: hidden; background: #eeeeee; color: #111;
  font: 11px/13px "Noto Sans", "DejaVu Sans", sans-serif;
}
p { margin: 0; }
i { font-style: normal; display: block; }
button { font: inherit; color: inherit; padding: 0; }
.sprite { display: none; }

/* icon sizes */
.ic-top { width: 32px; height: 32px; flex: none; margin-left: -2px; }
.ic-top-lens { width: 15px; height: 15px; }
.ic-rb { width: 32px; height: 32px; flex: none; }
.ic18 { width: 17px; height: 17px; flex: none; }
.ic16 { width: 16px; height: 16px; flex: none; }
.ic14 { width: 14px; height: 14px; flex: none; }
.ic-pin { width: 10px; height: 10px; flex: none; }
.ic-undo { width: 14px; height: 18px; }
.ic-check { width: 19px; height: 17px; flex: none; }
.ic-down { width: 10px; height: 14px; }
.ic-folder { width: 18px; height: 13px; }
.ic-caret { width: 8px; height: 6px; flex: none; }
.ic-eye { width: 17px; height: 11px; }
.ic-tri { width: 6px; height: 9px; }
.ic-ind { width: 6px; height: 8px; }
.ic-vs { width: 9px; height: 6px; }
.ic-first { width: 13px; height: 14px; flex: none; }
.ic-stage { width: 16px; height: 16px; flex: none; }
.ic-refresh { width: 17px; height: 20px; flex: none; }
.ic-pg { width: 9px; height: 14px; flex: none; }
.ic-bubble { width: 17px; height: 17px; }
.ic-doc { width: 11px; height: 13px; }
.ic-flow { width: 16px; height: 11px; }
.ic-calc { width: 16px; height: 18px; }

/* top bar */
.topbar {
  height: 39px; background: #fff; border-bottom: 1px solid #ccc; display: grid;
  grid-template-columns: 71px 100px 134px 136px 90px 63px 105px 97px 97px 1fr;
  align-items: start;
}
.topbar-search {
  height: 24px; width: 70px; background: #1878c4; display: flex; align-items: center; justify-content: center;
}
.nav-item { display: flex; align-items: center; gap: 4px; height: 38px; padding-top: 1px; white-space: nowrap; }
.nav-item-active {
  position: relative; z-index: 2; width: 91px; height: 41px; border: 3px solid #08ab8d; background: #f3f4f6;
  padding: 0 0 2px 3px; gap: 2px;
}
.win-ctrls { display: flex; justify-content: flex-end; align-items: center; height: 22px; padding-right: 6px; }
.ic-win-up { width: 9px; height: 6px; margin-right: 16px; }
.ic-win-min { width: 9px; height: 4px; margin-right: 17px; }
.ic-win-restore { width: 11px; height: 12px; margin-right: 15px; }
.win-close { font-weight: 700; font-size: 11px; width: 9px; }

/* ribbon */
.ribbon { height: 106px; background: #f3f4f6; display: flex; padding-top: 4px; }
.rgroup { height: 99px; border-right: 1px solid #d2d4d8; padding-top: 5px; display: flex; flex-direction: column; }
.rgroup-reg { width: 607px; }
.rgroup-ctrl { width: 239px; }
.rgroup-find { width: 107px; }
.rtools { display: grid; height: 76px; }
.rgroup-reg .rtools { grid-template-columns: 89px 75px 72px 71px 102px 84px 96px; margin-left: 11px; }
.rgroup-ctrl .rtools { grid-template-columns: 88px 70px 70px; margin-left: 5px; }
.rgroup-find .rtools { grid-template-columns: 96px; margin-left: 6px; }
.rtool { display: flex; flex-direction: column; align-items: center; padding-top: 8px; white-space: nowrap; }
.rtool .ic-rb { margin-bottom: 15px; }
.rtool-active { border: 3px solid #08ab8d; padding-top: 5px; }
.rsmall { display: flex; flex-direction: column; gap: 1px; padding: 2px 0 0 2px; }
.rsmall-row { display: flex; align-items: center; gap: 2px; height: 17px; white-space: nowrap; }
.rgroup-label { text-align: center; color: #aaa; line-height: 14px; margin-top: 2px; }
.rgroup-reg .rgroup-label { width: 610px; }
.rgroup-ctrl .rgroup-label { width: 238px; }

/* panel head */
.phead {
  height: 22px; display: flex; align-items: center; gap: 6px; padding-left: 8px; background: linear-gradient(#f0f0f0, #eaeaea);
  white-space: nowrap;
}

/* search panel */
.search { height: 150px; padding-top: 3px; background: #f3f4f6; border-left: 2px solid #9a9a9a; border-bottom: 2px solid #ddd; display: flex; flex-direction: column; }
.phead-search { height: 25px; border-top: 2px solid #9a9a9a; padding-left: 6px; background: #eee; }
.search-body { flex: 1; background: #eeeeee; border-top: 4px solid #f3f4f6; display: flex; justify-content: space-between; padding-right: 30px; }
.search-actions { padding: 10px 0 0 11px; width: 150px; }
.sa-row { display: flex; justify-content: space-between; margin-bottom: 3px; height: 20px; width: 139px; }
.sa-row-last { margin-top: 6px; }
.btn {
  display: flex; align-items: center; justify-content: center; background: #f0f0f0; border: 1px solid #a9a9a9; border-radius: 0; white-space: nowrap; direction: ltr;
}
.btn span { direction: rtl; }
.btn-off { background: #dfdfdf; color: #9a9a9a; border-color: #c8c8c8; }
.btn-back { width: 31px; }
.btn-find { width: 104px; justify-content: space-between; padding: 0 15px 0 33px; }
.btn-wide { width: 139px; justify-content: space-between; padding: 0 17px 0 22px; }
.btn-save { width: 69px; font-size: 10px; justify-content: space-between; padding: 0 1px 0 2px; }
.btn-tpl { width: 64px; justify-content: space-between; padding: 0 13px 0 13px; }
.search-form { width: 1016px; direction: rtl; padding-top: 30px; display: flex; flex-direction: column; }
.frow { display: grid; align-items: center; }
.frow-1 { grid-template-columns: 40px 98px 60px 80px 64px 80px 68px 82px 65px 86px 80px 81px 47px 85px; height: 21px; margin-bottom: 9px; }
.frow-2 { grid-template-columns: 40px 98px 78px 52px 65px 58px 64px 118px 230px 69px 59px 85px; height: 21px; margin-bottom: 12px; }
.frow-3 { grid-template-columns: 40px 170px 70px 53px 240px 65px 165px 100px; height: 20px; }
.flabel { text-align: left; padding-left: 9px; display: block; white-space: nowrap; }
.flabel-b { font-weight: 700; }
.flabel-2 { line-height: 13px; justify-self: end; padding-left: 8px; text-align: right; }
.inp {
  height: 21px; background: #e9f0fb; border: 1px solid #707070; line-height: 19px; padding: 0 2px; white-space: nowrap; overflow: hidden; direction: rtl;
}
.inp-num { direction: ltr; text-align: right; }
.inp-dis { background: #d0d0d0; }
.sel {
  height: 20px; background: #fff; border: 1px solid #aaa; line-height: 18px; padding-right: 3px; white-space: nowrap; overflow: hidden;
  position: relative;
}
.sel::after {
  content: ""; position: absolute; left: 7px; top: 5px; width: 5px; height: 5px; border-right: 2px solid #555; border-bottom: 2px solid #555; transform: rotate(45deg);
}
.sel-low { margin-top: 5px; height: 19px; }
.sel-off { background: #e4e4e4; color: #999; }
.sel-part { background: linear-gradient(to left, #fff 78%, #e4e4e4 78%); border-color: #ccc; }
.sel-clip { text-align: left; padding-left: 20px; padding-right: 0; direction: ltr; }
.chk { display: flex; align-items: center; gap: 9px; white-space: nowrap; }
.chk-b { font-weight: 700; }
.box { display: block; width: 13px; height: 14px; background: #fff; border: 1px solid #333; flex: none; }
.chk-i1 { padding-right: 7px; gap: 12px; }
.chk-f1 { padding-right: 8px; gap: 10px; }
.chk-f2 { padding-right: 7px; }
.datebox { display: flex; height: 20px; }
.date-text { flex: 1; overflow: hidden; border: 1px solid #d8d8d8; border-bottom: 0; color: #888; line-height: 18px; padding-right: 3px; white-space: nowrap; background: linear-gradient(#e4e4e4, #f4f4f4); }
.date-btn { width: 19px; background: #f0f0f0; border: 1px solid #777; display: flex; align-items: center; justify-content: center; }
.date-btn i { width: 0; height: 0; border: 3.500px solid transparent; border-top: 5px solid #111; margin-top: 5px; }
.date-time { width: 37px; margin-right: 1px; background: #e8e8e8; border: 1px solid #ccc; color: #888; text-align: center; line-height: 18px; direction: ltr; }

/* main */
.main { display: flex; height: 483px; position: relative; }
.left { width: 265px; padding: 6px 4px 0 2px; background: #ddd; display: flex; flex-direction: column; box-shadow: inset 2px 0 0 #9a9a9a; }
.files { height: 356px; background: #f3f4f6; }
.files-body { height: 334px; padding: 5px 0 0; }
.hints { color: #ff1a1a; direction: rtl; padding-right: 9px; height: 44px; line-height: 13px; font-size: 10.800px; }
.filelist { margin-left: 7px; width: 247px; height: 199px; background: #fff; border: 1px solid #999; }
.files-checks { display: flex; direction: rtl; padding-right: 8px; gap: 11px; margin-top: 7px; height: 14px; }
.chk-off { color: #777; }
.chk-off .box { border-color: #bbb; }
.files-desc { direction: rtl; display: grid; grid-template-columns: 88px 164px; margin-top: 9px; height: 20px; align-items: center; }
.files-desc .inp { height: 20px; }
.files-btns { direction: rtl; display: flex; padding-right: 5px; margin-top: 6px; height: 24px; align-items: stretch; }
.btn-sel { width: 77px; justify-content: space-between; padding: 0 4px 0 8px; margin-left: 6px; }
.btn-del { width: 68px; margin-left: 6px; gap: 11px; }
.split { display: flex; border: 2px solid #aaa; background: #f0f0f0; align-items: center; justify-content: center; }
.split i { display: flex; align-items: center; justify-content: center; align-self: stretch; }
.split-ops { width: 63px; direction: rtl; }
.split-ops span { flex: 1; text-align: center; }
.split-ops i { width: 15px; border-right: 2px solid #aaa; }
.hash { color: #e01010; font-weight: 700; text-align: center; width: 34px; line-height: 12px; padding-top: 1px; }
.notes { margin-top: 4px; height: 85px; background: #f3f4f6; }
.notes-body { height: 63px; }
.notes-row { direction: rtl; display: grid; grid-template-columns: 78px 134px 6px 34px; padding-top: 7px; height: 29px; align-items: center; }
.notes-row .btn { grid-column: 4; height: 21px; }
.notes-row .flabel { padding-left: 10px; }
.notes-acts { display: flex; direction: rtl; gap: 6px; padding-right: 5px; margin-top: 5px; border-top: 1px solid #fff; height: 24px; padding-top: 1px; }
.btn-ndel, .btn-nedit { width: 67px; gap: 12px; }
.left-foot { height: 32px; background: #eee; border-top: 1px solid #ddd; display: flex; padding: 4px 0 5px 3px; gap: 6px; }
.split-ic { width: 37px; height: 23px; justify-content: space-between; }
.split-ic svg:first-child { margin-left: 2px; }
.split-ic i { width: 15px; border-left: 2px solid #aaa; }
.split-ic + .split-ic { width: 35px; }

.work { width: 1335px; display: flex; flex-direction: column; }
.work-top { height: 273px; background: #ddd; padding-top: 5px; display: grid; grid-template-columns: 626px 515px 184px; column-gap: 4px; }
.tabpanel { background: #f3f4f6; }
.tabs { height: 26px; background: #fff; border-bottom: 1px solid #ccc; display: flex; justify-content: flex-end; align-items: flex-end; position: relative; }
.tab { height: 25px; width: 62px; margin-right: 40px; border: 1px solid #9fc6e8; border-bottom: 0; background: #f3f4f6; text-align: center; line-height: 24px; margin-bottom: -1px; }
.tab-b { font-weight: 700; width: 47px; margin-right: 39px; }
.tab-close { position: absolute; left: 6px; top: 4px; font-size: 13px; font-weight: 700; line-height: 16px; color: #222; }
.gbox { background: #fff; border: 1px solid #a0a0a0; margin: 6px 0 0 8px; display: flex; flex-direction: column; }
.gbox-items { width: 612px; height: 191px; }
.gbox-orders { width: 500px; height: 162px; }
.gdrop { height: 25px; direction: rtl; text-align: center; line-height: 27px; flex: none; font-size: 11.400px; }
.gbox-items .gdrop { text-align: right; padding-right: 192px; }
.gt { table-layout: fixed; border-collapse: collapse; direction: rtl; flex: none; }
.gt th { height: 15px; padding: 0 2px; font-weight: 400; color: #666; background: linear-gradient(#fff, #f1f1f1); border-left: 1px solid #d0d0d0; border-bottom: 1px solid #a0a0a0; white-space: nowrap; overflow: hidden; text-align: center; font-size: 11.400px; line-height: 13px; }
.gt td { padding: 0 3px; white-space: nowrap; overflow: hidden; border-left: 1px solid #cfcfcf; border-bottom: 1px solid #d0d0d0; height: 16px; line-height: 13px; text-align: right; font-size: 10.800px; }
.gt .l { text-align: left; }
.gt .c { text-align: center; }
.gt-items { width: 608px; margin-left: 1px; }
.ci0 { width: 20px; } .ci1 { width: 70px; } .ci2 { width: 76px; } .ci3 { width: 74px; } .ci4 { width: 106px; } .ci5 { width: 94px; } .ci6 { width: 136px; } .ci7 { width: 32px; }
.gt .r-main td { height: 22px; background: #bcbcbc; font-weight: 700; font-size: 11px; border-bottom: 1px solid #6fb0ee; border-left-color: #cdcdcd; padding: 0 2px; }
.gt .r-main .ind { background: #e5f1fb; text-align: center; }
.gt-orders .r-main .ind { background: #bcbcbc; }
.gt .r-main .cur { background: #aad4ff; border: 1px solid #5a9be0; }
.gfill { flex: 1; }
.hscroll { height: 15px; flex: none; display: flex; margin: 0 1px 2px; background: #f2f2f2; }
.hs-track { display: block; }
.hs-thumb { display: block; background: #cacaca; }
.hs-arrow { display: flex; align-items: center; justify-content: center; width: 18px; flex: none; }
.hscroll-items .hs-track { width: 284px; }
.hscroll-items .hs-thumb { width: 306px; }
.gt-wrap { display: flex; flex: none; }
.vscroll { width: 15px; margin-left: 2px; background: #f5f5f5; display: flex; flex-direction: column; align-items: center; height: 117px; flex: none; }
.vscroll i { width: 15px; height: 54px; background: #c6c6c6; margin: 5px 0 35px; }
.vscroll .ic-vs { margin-top: 4px; }
.vscroll i + .ic-vs { margin-top: 0; }
.gt-orders { width: 479px; }
.co0 { width: 19px; } .co1 { width: 89px; } .co2 { width: 59px; } .co3 { width: 143px; } .co4 { width: 65px; } .co5 { width: 39px; } .co6 { width: 65px; }
.r-gray td { background: #bcbcbc; }
.r-pink td { background: #ffa0ff; }
.r-mag td { background: #ff20ff; }
.gt .idc { background: #e9f1fb; }
.hscroll-orders { margin: 2px 1px 0 17px; width: 479px; }
.hscroll-orders .hs-track { flex: 1; }
.hscroll-orders .hs-thumb { width: 104px; }
.items-foot { display: flex; margin: 10px 0 0 360px; height: 24px; }
.nav-off { width: 82px; background: #dcdcdc; border: 1px solid #c4c4c4; display: flex; align-items: center; color: #999; padding: 0 8px; gap: 16px; direction: ltr; white-space: nowrap; }
.stages { width: 93px; background: #efefef; border: 1px solid #aaa; display: flex; align-items: center; padding: 0 0 0 4px; justify-content: space-between; }
.stages span { margin-left: 8px; }
.pending { width: 82px; background: #ffa0f2; display: flex; align-items: center; border: 1px solid #aaa; justify-content: space-between; padding: 0 2px 0 3px; font-size: 9.500px; white-space: nowrap; }
.pending span { direction: rtl; }
.orders-acts { display: flex; flex-direction: row-reverse; margin: 9px 0 0 196px; width: 309px; height: 24px; justify-content: space-between; }
.btn-o1 { width: 96px; gap: 5px; }
.btn-o2 { width: 69px; gap: 11px; }
.btn-o3 { width: 88px; gap: 18px; }
.btn-o4 { width: 38px; gap: 4px; }
.orders-pager { display: flex; flex-direction: row-reverse; margin: 6px 0 0 226px; width: 279px; height: 24px; justify-content: space-between; align-items: center; }
.btn-page { width: 80px; height: 24px; gap: 9px; font-size: 10.500px; }
.pager-info { color: #f01010; direction: rtl; font-size: 10px; }
.design { background: #f3f4f6; margin-top: 1px; }
.design-body { direction: rtl; display: grid; grid-template-columns: 90px 89px; grid-auto-rows: 21px; row-gap: 6px; padding-top: 7px; }
.design-body label { padding-left: 10px; color: #888; white-space: nowrap; padding-top: 3px; text-align: left; }
.design-body .inp { color: #555; }
.inp-cut { padding: 0; font-size: 9.500px; }
.design-body .design-note { grid-column: 1 / 3; height: 15px; margin-top: -1px; padding-top: 0; padding-left: 99px; }
.design-area { grid-column: 1 / 3; display: flex; direction: ltr; margin-top: -4px; height: 78px; width: 173px; justify-self: end; }
.area-scroll { width: 17px; background: #f0f0f0; display: flex; flex-direction: column; justify-content: space-between; align-items: center; padding: 6px 0; flex: none; }
.area-box { width: 156px; background: #d0d0d0; border: 1px solid #777; flex: none; }
.work-bottom { height: 178px; background: #ddd; border-top: 3px solid #ddd; display: grid; grid-template-columns: 339px 404px 581px; column-gap: 4px; }
.work-bottom > section { height: 175px; background: #f3f4f6; }
.work-bottom .detail { margin-left: 2px; }
.pcard-box { margin: 4px 3px 0; height: 146px; background: #fff; border: 1px solid #a0a0a0; padding: 5px 5px 0 0; display: flex; justify-content: flex-end; }
.card { width: 67px; height: 92px; border: 1px solid #a0a0a0; padding: 18px 3px 0 0; display: flex; flex-direction: column; direction: rtl; }
.card-row { display: flex; align-items: center; gap: 6px; height: 18px; white-space: nowrap; font-size: 10px; }
.card-row-b { font-weight: 700; font-size: 10.500px; gap: 3px; }
.feat-box { margin: 4px 2px 0 3px; height: 146px; background: #fff; border: 1px solid #a0a0a0; }
.feat-head { display: grid; grid-template-columns: 139px 135px; direction: rtl; width: 274px; margin-left: auto; height: 25px; border-bottom: 1px solid #aaa; box-shadow: -1px 0 0 #aaa; background: linear-gradient(#fff, #f1f1f1); color: #666; text-align: center; line-height: 25px; }
.feat-head span + span { border-right: 1px solid #aaa; }
.detail-body { direction: rtl; display: grid; grid-template-columns: 103px 172px 86px 172px 39px; grid-template-rows: 21px 21px 21px 28px 28px; row-gap: 6px; padding-top: 7px; align-items: start; }
.detail-body > label { padding-left: 9px; white-space: nowrap; padding-top: 5px; text-align: left; }
.inp-amt { direction: ltr; text-align: right; padding-right: 4px; }
.inp-yellow { background: #ffffe1; font-size: 10.500px; padding: 0 1px; }
.inp-red { grid-column: 2 / 5; color: #f01010; }
.btn-dl { height: 21px; width: 33px; margin-right: 6px; }
.strip { grid-column: 2 / 5; display: flex; height: 28px; background: #e6effb; padding: 3px; gap: 7px; }
.strip-inp { flex: 1; height: 22px; background: #e9f0fb; border: 1px solid #aaa; }
.btn-more { width: 26px; height: 20px; margin-top: 1px; background: #eee; font-weight: 700; }
.work-foot { height: 32px; background: #eee; }

/* context menu (floating) */
.ctx {
  position: absolute; left: 262px; top: 84px; width: 217px; height: 434px; background: #eeeeee; direction: rtl;
  padding-top: 2px; z-index: 5; box-shadow: inset -1px 0 0 #ddd; font-size: 10.800px;
}
.ctx-item { height: 24px; display: flex; align-items: center; padding-right: 4px; gap: 6px; position: relative; white-space: nowrap; }
.ctx-item-s { height: 25px; }
.ctx-sep { height: 1px; border: 0; background: #a8a8a8; margin: 1px 0; }
.ctx-sep-a { margin: 1px 0 2px; }
.ctx-sep-b { margin: 0; }
.ctx-sep-c { margin: 1px 0; }
.ctx-sep-d { margin: 3px 0; }
.ctx-item-hot {
  background: #cfe0f1; outline: 1px solid #a6c5e3; margin: 1px 0 0; z-index: 1;
  box-shadow: 0 0 0 1px #cfe0f1, 0 0 0 4px #08ab8d;
}
.ic-cursor { position: absolute; left: 16px; top: 4px; width: 13px; height: 20px; }
.ic-sub { position: absolute; left: 4px; top: 9px; width: 5px; height: 8px; }

/* status */
.status { margin-top: 1px; height: 23px; width: 1597px; background: #fff; direction: rtl; display: flex; align-items: center; padding-right: 7px; white-space: nowrap; font-size: 10.800px; gap: 5px; }
.red { color: #f01010; }
.st-div { width: 2px; height: 18px; background: #bbb; margin: 0 1px; }
.st-calc { background: #e2e2e2; border: 1px solid #bbb; width: 20px; height: 20px; display: flex; align-items: center; justify-content: center; margin-right: 2px; }
.taskbar { margin-top: 3px; height: 23px; width: 1597px; background: #fff; display: flex; padding: 3px 0 0 4px; }
.task { height: 17px; width: 91px; background: #eee; border: 1px solid #aaa; text-align: center; line-height: 15px; white-space: nowrap; direction: rtl; font-size: 10.200px; }
.task-on { color: #f01010; }
.task-ltr { width: 97px; direction: ltr; }
```
